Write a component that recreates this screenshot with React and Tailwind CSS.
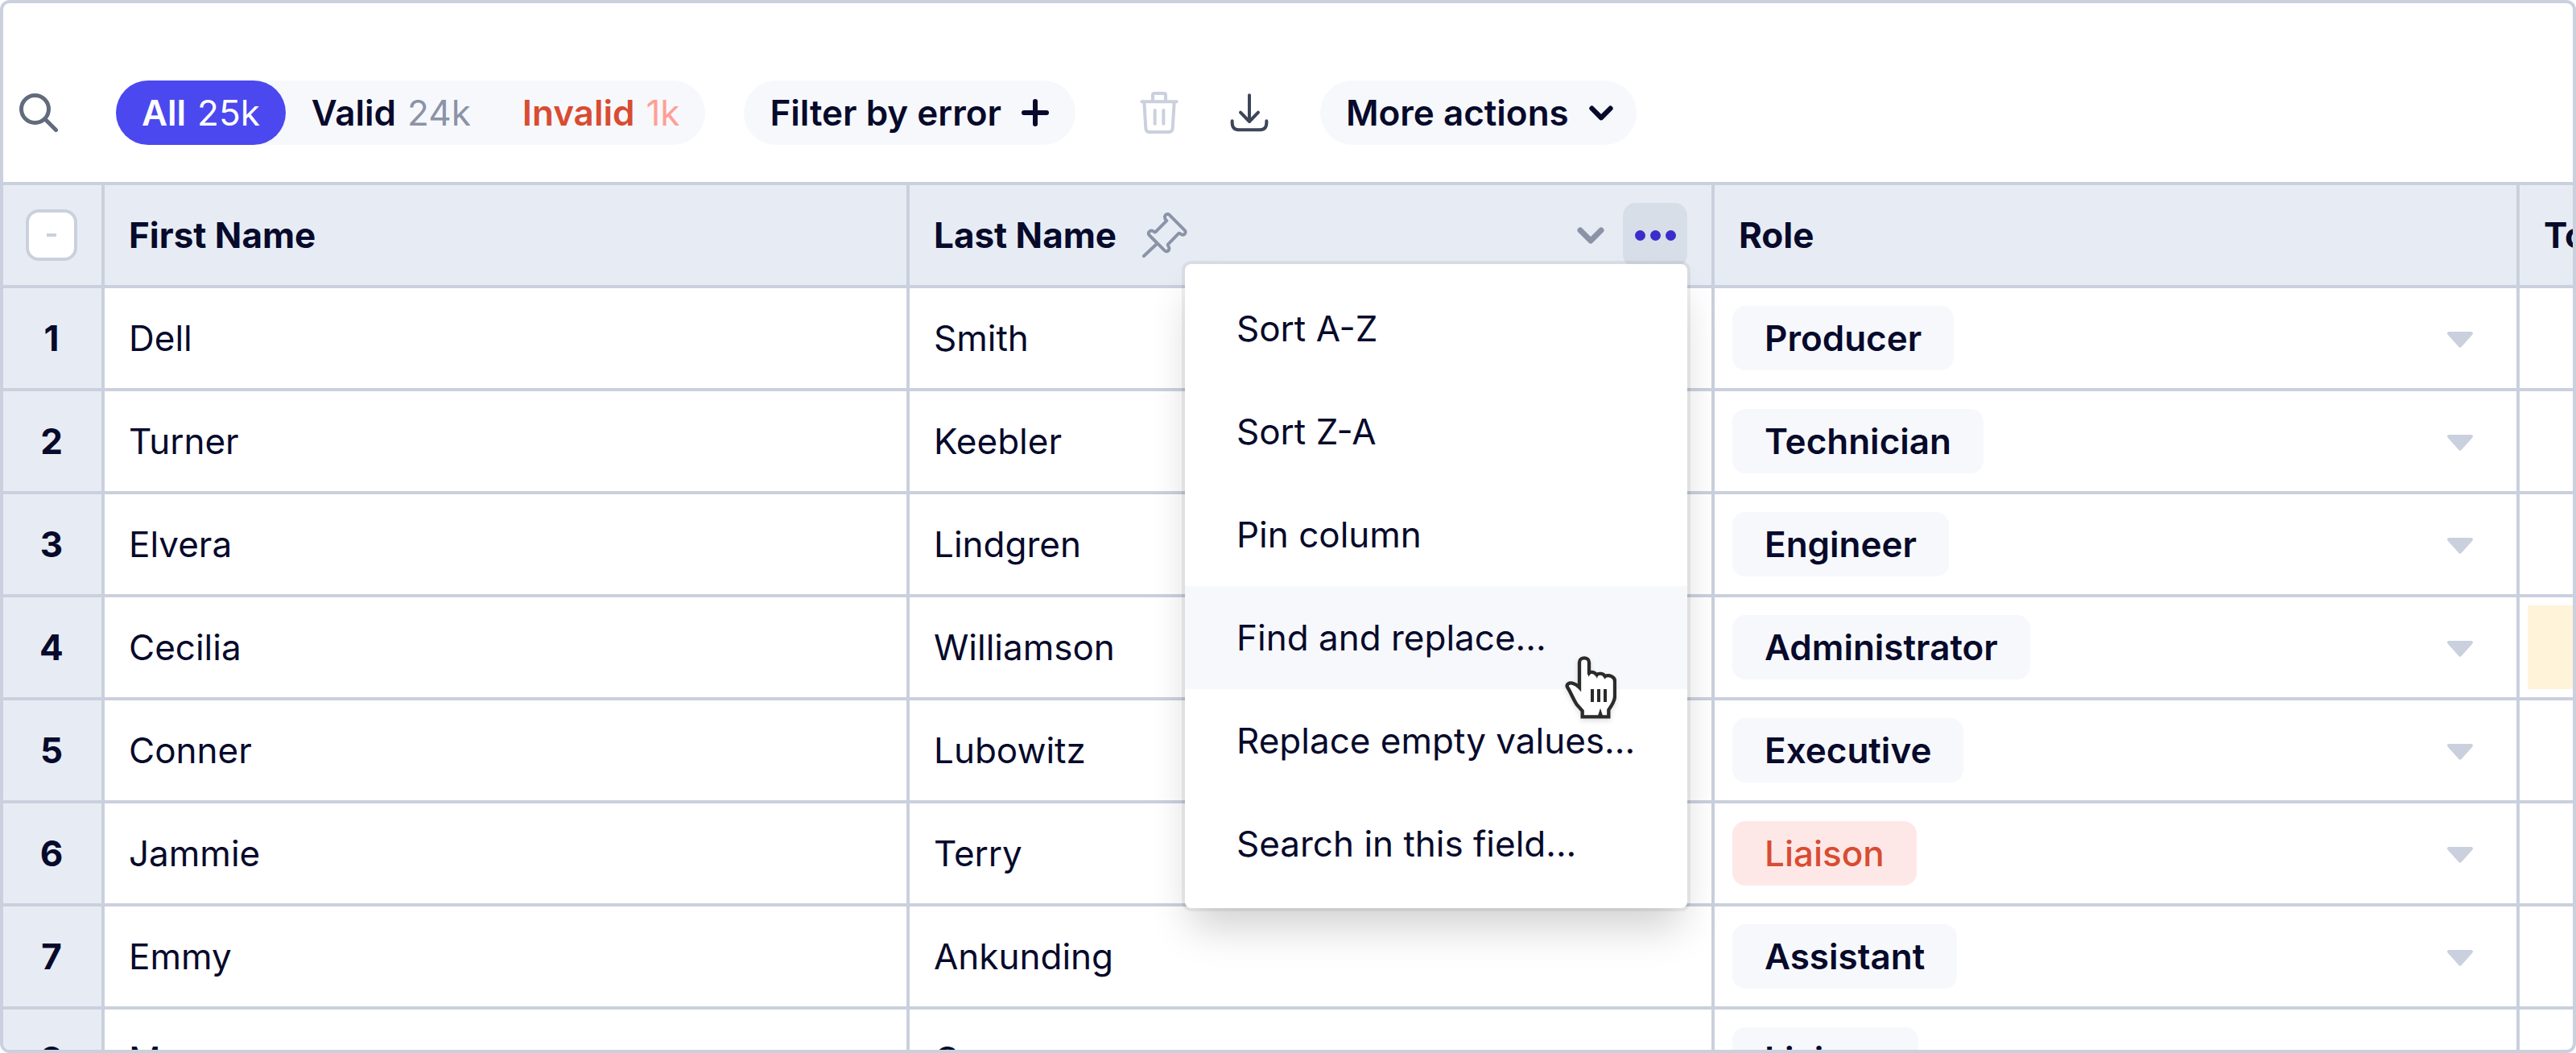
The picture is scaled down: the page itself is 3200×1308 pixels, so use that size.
import React from "react";

const people = [
  { first: "Dell", last: "Smith", role: "Producer" },
  { first: "Turner", last: "Keebler", role: "Technician" },
  { first: "Elvera", last: "Lindgren", role: "Engineer" },
  { first: "Cecilia", last: "Williamson", role: "Administrator", flagged: true },
  { first: "Conner", last: "Lubowitz", role: "Executive" },
  { first: "Jammie", last: "Terry", role: "Liaison", invalid: true },
  { first: "Emmy", last: "Ankunding", role: "Assistant" },
  { first: "Mose", last: "Conroy", role: "Liaison" },
];

const menuItems = [
  "Sort A-Z",
  "Sort Z-A",
  "Pin column",
  "Find and replace...",
  "Replace empty values...",
  "Search in this field...",
];

function SearchIcon() {
  return (
    <svg className="size-12" viewBox="0 0 48 48" fill="none" stroke="currentColor" strokeWidth="5" strokeLinecap="round">
      <circle cx="19.5" cy="19.5" r="17" />
      <path d="M32 32 45.500 45.500" />
    </svg>
  );
}

function TrashIcon() {
  return (
    <svg className="h-13 w-12" viewBox="108 72 144 156" fill="none" stroke="currentColor" strokeWidth="12" strokeLinecap="round">
      <path d="M115 109H245M156 106V84q0-6 6-6h36q6 0 6 6v22M124 112l6 96q1 14 14 14h72q13 0 14-14l6-96M164 141v50M196 141v50" />
    </svg>
  );
}

function DownloadIcon() {
  return (
    <svg className="size-12" viewBox="444 78 144 144" fill="none" stroke="currentColor" strokeWidth="12" strokeLinecap="round" strokeLinejoin="round">
      <path d="M516 85v97M483 149l33 34 33-34M452 181v7q0 26 28 26h72q28 0 28-26v-7" />
    </svg>
  );
}

function PlusIcon() {
  return (
    <svg className="size-9" viewBox="0 0 36 36" fill="none" stroke="currentColor" strokeWidth="6" strokeLinecap="round">
      <path d="M18 4v28M4 18h28" />
    </svg>
  );
}

function ChevronIcon({ className }) {
  return (
    <svg className={className} viewBox="0 0 36 36" fill="none" stroke="currentColor" strokeWidth="7" strokeLinecap="round" strokeLinejoin="round">
      <path d="m5 12 13 13 13-13" />
    </svg>
  );
}

function PinIcon() {
  return (
    <svg className="size-14" viewBox="60 100 170 170" fill="none" stroke="currentColor" strokeWidth="12" strokeLinecap="round" strokeLinejoin="round">
      <path d="M152 131C147 127 144 121 145 114 147 106 156 103 162 109L220 167C226 173 222 183 213 184 206 185 203 177 198 178L156 221C156 226 163 230 161 238 159 248 149 249 144 243L86 185C80 178 86 168 95 168 102 168 104 175 109 174ZM116 217 66 264" />
    </svg>
  );
}

function CaretIcon() {
  return (
    <svg className="mt-1 h-5 w-8 shrink-0" viewBox="0 0 32 20" fill="currentColor">
      <path d="M2 0h28q3.500 1 1 4L18 18.500q-2 2.500-4 0L1 4Q-1.500 1 2 0Z" />
    </svg>
  );
}

function HandCursor() {
  return (
    <svg className="h-20 w-16 drop-shadow-md" viewBox="132 102 192 240">
      <path
        fill="#fff"
        stroke="#2b2b2b"
        strokeWidth="13"
        d="M197 331V309L175 284C160 260 154 240 142 222 135 210 148 203 160 206 174 209 180 216 186 222V128C186 107 222 107 222 128V166C235 162 245 168 250 174 262 168 275 170 281 180 297 173 318 182 318 198V255C318 272 306 290 295 305V331Z"
      />
      <path
        fill="#2b2b2b"
        d="M184 215 191 238V205ZM219 162V182L231 168ZM248 172 251 190 258 172ZM279 177 281 193 288 178ZM264 299 254 330H274ZM228 228h12v48h-12ZM252 228h12v48h-12ZM276 228h12v48h-12Z"
      />
    </svg>
  );
}

function Toolbar() {
  return (
    <div className="flex items-center border-b-4 border-[#cad0dd] pt-24 pb-[46px] pl-5 text-[44px] leading-[56px] font-semibold whitespace-nowrap">
      <button type="button" aria-label="Search" className="text-[#616b7c]">
        <SearchIcon />
      </button>
      <div className="ml-[72px] flex h-20 rounded-full bg-[#f7f8fc]">
        <button type="button" aria-pressed="true" className="flex items-center gap-3.5 rounded-full bg-[#4b48ef] px-8 text-white">
          All <span className="font-normal">25k</span>
        </button>
        <button type="button" className="flex items-center gap-3.5 px-8">
          Valid <span className="font-normal text-[#8b93a7]">24k</span>
        </button>
        <button type="button" className="flex items-center gap-3.5 px-8 text-[#d84c32]">
          Invalid <span className="font-normal text-[#ff9f95]">1k</span>
        </button>
      </div>
      <button type="button" className="ml-12 flex h-20 items-center gap-6 rounded-full bg-[#f7f8fc] px-8">
        Filter by error
        <PlusIcon />
      </button>
      <button type="button" aria-label="Delete" className="ml-20 text-[#cad0dd]">
        <TrashIcon />
      </button>
      <button type="button" aria-label="Download" className="ml-16 text-[#3d4659]">
        <DownloadIcon />
      </button>
      <button type="button" className="ml-16 flex h-20 items-center gap-6 rounded-full bg-[#f7f8fc] pr-7 pl-8">
        More actions
        <ChevronIcon className="size-8" />
      </button>
    </div>
  );
}

function ColumnMenu() {
  return (
    <div
      role="menu"
      className="absolute top-[98px] right-[30px] z-10 w-[624px] rounded-lg bg-white py-4 font-normal shadow-[0_0_0_4px_rgba(0,0,0,0.06),0_32px_48px_-8px_rgba(0,0,0,0.18)]"
    >
      {menuItems.map((item) => (
        <button
          key={item}
          type="button"
          role="menuitem"
          className={
            item === "Find and replace..."
              ? "block h-32 w-full bg-[#f7f8fc] px-16 text-left whitespace-nowrap"
              : "block h-32 w-full px-16 text-left whitespace-nowrap"
          }
        >
          {item}
        </button>
      ))}
      <div className="pointer-events-none absolute top-[486px] right-[88px]">
        <HandCursor />
      </div>
    </div>
  );
}

const headCell = "border-r-4 border-b-4 border-[#cad0dd] bg-[#e7ecf4] px-[30px] text-left font-bold";
const bodyCell = "border-r-4 border-b-4 border-[#cad0dd] px-[30px]";

export default function App() {
  return (
    <div className="h-screen overflow-hidden rounded-xl border-4 border-[#cad0dd] bg-white font-[Inter,sans-serif] text-[#070a2b]">
      <Toolbar />
      <table className="w-[4126px] table-fixed border-separate border-spacing-0 text-[44px] leading-[56px]">
        <colgroup>
          <col className="w-[126px]" />
          <col className="w-[1000px]" />
          <col className="w-[1000px]" />
          <col className="w-[1000px]" />
          <col className="w-[1000px]" />
        </colgroup>
        <thead>
          <tr className="h-32">
            <th className="border-r-4 border-b-4 border-[#cad0dd] bg-[#e7ecf4] p-0 pr-0.5">
              <label className="relative mx-auto flex size-16 items-center justify-center">
                <input
                  type="checkbox"
                  aria-label="Select all rows"
                  className="size-16 appearance-none rounded-2xl border-4 border-[#cad0dd] bg-white"
                />
                <span className="absolute h-1 w-3 bg-[#cad0dd]" />
              </label>
            </th>
            <th className={headCell}>First Name</th>
            <th className="relative border-r-4 border-b-4 border-[#cad0dd] bg-[#e7ecf4] px-[30px] text-left font-bold">
              <div className="flex items-center">
                Last Name
                <span className="ml-8 text-[#8b93a7]">
                  <PinIcon />
                </span>
                <button type="button" aria-label="Sort column" className="ml-auto text-[#8b93a7]">
                  <ChevronIcon className="size-9" />
                </button>
                <button
                  type="button"
                  aria-label="Column options"
                  className="ml-[22px] flex size-20 items-center justify-center gap-[6px] rounded-2xl bg-[#d8dee8]"
                >
                  <span className="size-[13px] rounded-full bg-[#3a2dcb]" />
                  <span className="size-[13px] rounded-full bg-[#3a2dcb]" />
                  <span className="size-[13px] rounded-full bg-[#3a2dcb]" />
                </button>
              </div>
              <ColumnMenu />
            </th>
            <th className={headCell}>Role</th>
            <th className={headCell}>Town</th>
          </tr>
        </thead>
        <tbody>
          {people.map((p, i) => (
            <tr key={i} className="h-32">
              <th scope="row" className="border-r-4 border-b-4 border-[#cad0dd] bg-[#e7ecf4] p-0 pr-0.5 text-center font-bold">
                {i + 1}
              </th>
              <td className={bodyCell}>{p.first}</td>
              <td className={bodyCell}>{p.last}</td>
              <td className="border-r-4 border-b-4 border-[#cad0dd] pr-[54px] pl-[22px]">
                <label className="flex items-center justify-between text-[#cad0dd]">
                  <select
                    aria-label={"Role of " + p.first + " " + p.last}
                    defaultValue={p.role}
                    className={
                      p.invalid
                        ? "field-sizing-content h-20 appearance-none rounded-2xl bg-[#fee8e7] px-10 font-medium text-[#d84c32]"
                        : "field-sizing-content h-20 appearance-none rounded-2xl bg-[#f7f8fc] px-10 font-semibold text-[#070a2b]"
                    }
                  >
                    <option>{p.role}</option>
                  </select>
                  <CaretIcon />
                </label>
              </td>
              <td className="border-r-4 border-b-4 border-[#cad0dd] px-[10px] py-0">
                {p.flagged && <div className="h-[104px] bg-[#fff4d9]" />}
              </td>
            </tr>
          ))}
        </tbody>
      </table>
    </div>
  );
}
